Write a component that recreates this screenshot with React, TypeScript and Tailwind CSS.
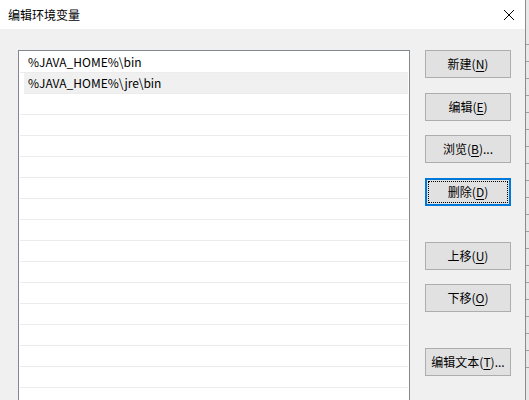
import React from 'react';

const FONT = { fontFamily: '"Noto Sans CJK SC", "Noto Sans", sans-serif' };

const paths = ['%JAVA_HOME%\\bin', '%JAVA_HOME%\\jre\\bin'];

interface BtnProps {
  label: string;
  hot: string;
  tail?: string;
  focused?: boolean;
  className?: string;
}

const Btn: React.FC<BtnProps> = ({ label, hot, tail = '', focused, className = '' }) => (
  <button
    className={`w-[86px] h-[28px] bg-[#e1e1e1] text-[12px] text-black leading-none flex items-center justify-center ${
      focused ? 'border-2 border-[#0078d7]' : 'border border-[#adadad]'
    } ${className}`}
  >
    {focused ? (
      <span className="w-[80px] h-[22px] border border-dotted border-black flex items-center justify-center">
        {label}(<span className="underline underline-offset-2">{hot}</span>){tail}
      </span>
    ) : (
      <span>
        {label}(<span className="underline underline-offset-2">{hot}</span>){tail}
      </span>
    )}
  </button>
);

const App: React.FC = () => {
  const rows = Array.from({ length: 17 });

  return (
    <div className="w-[529px] h-[400px] overflow-hidden flex" style={FONT}>
      {/* dialog */}
      <div className="w-[525px] h-full flex flex-col bg-[#f0f0f0]">
        <div className="h-[29px] bg-white flex items-center justify-between shrink-0">
          <span className="ml-[8px] text-[12px] text-black">编辑环境变量</span>
          <svg width="12" height="12" viewBox="0 0 12 12" className="mr-[10px]">
            <path d="M1 1 L11 11 M11 1 L1 11" stroke="#000" strokeWidth="1" />
          </svg>
        </div>

        <div className="flex pt-[21px]">
          {/* list */}
          <div className="ml-[18px] w-[392px] h-[360px] bg-white border border-[#828790] pt-[1px] px-[1px] overflow-hidden">
            {rows.map((_, i) => (
              <div
                key={i}
                className={`h-[21px] border-b border-[#ececec] flex items-center text-[12px] text-black ${
                  i === 1 ? 'bg-[#f0f0f0] ml-[4px]' : ''
                }`}
              >
                {paths[i] && <span className={i === 1 ? 'pl-[4px]' : 'pl-[8px]'}>{paths[i]}</span>}
              </div>
            ))}
          </div>

          {/* buttons */}
          <div className="ml-[15px] flex flex-col">
            <Btn label="新建" hot="N" />
            <Btn label="编辑" hot="E" className="mt-[15px]" />
            <Btn label="浏览" hot="B" tail="..." className="mt-[14px]" />
            <Btn label="删除" hot="D" focused className="mt-[15px]" />
            <Btn label="上移" hot="U" className="mt-[36px]" />
            <Btn label="下移" hot="O" className="mt-[14px]" />
            <Btn label="编辑文本" hot="T" tail="..." className="mt-[36px]" />
          </div>
        </div>
      </div>

      {/* window edge and the window behind */}
      <div className="w-[1px] h-full bg-[#8c8c8c]" />
      <div className="flex-1 h-full bg-[#e8e8e8] flex flex-col pt-[28px]">
        {Array.from({ length: 20 }).map((_, i) => (
          <div key={i} className="h-[17px] border-b border-[#a0a0a0]" />
        ))}
      </div>
    </div>
  );
};

export default App;
